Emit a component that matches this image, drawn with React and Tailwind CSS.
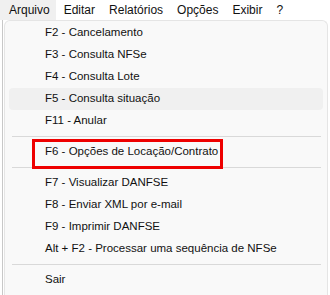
import React from 'react';

const menus = ['Arquivo', 'Editar', 'Relatórios', 'Opções', 'Exibir', '?'];

const Item = ({ label, active }) => (
  <div
    className={`h-[22px] mx-[4px] pl-[36px] flex items-center rounded-[4px] ${
      active ? 'bg-[#f0f0f0]' : ''
    }`}
  >
    {label}
  </div>
);

const Sep = () => (
  <div className="h-[9px] flex items-center pl-[7px] pr-[6px]">
    <div className="h-px w-full bg-[#d9d9d9]" />
  </div>
);

export default function App() {
  return (
    <div
      className="w-[330px] h-[295px] overflow-hidden bg-white text-[11.5px] text-[#111111]"
      style={{ fontFamily: '"Segoe UI", "Liberation Sans", Arial, sans-serif' }}
    >
      {/* barra de menus */}
      <div className="h-[20px] flex items-center text-[12px]">
        {menus.map((m, i) => (
          <div
            key={m}
            className={`h-full flex items-center ${
              i === 0 ? 'pl-[9px] pr-[6px] bg-[#f0f0f0]' : 'pl-[8px] pr-[6px]'
            }`}
          >
            {m}
          </div>
        ))}
      </div>

      <div className="flex h-full">
        <div className="w-[4px] flex">
          <div className="ml-[2px] w-px h-full bg-[#c8c8c8]" />
        </div>
        {/* menu Arquivo aberto */}
        <div className="relative w-[324px] h-full bg-[#f9f9f9] border-l border-t border-r border-[#e5e5e5] rounded-t-[6px] pt-[1px]">
          <Item label="F2 - Cancelamento" />
          <Item label="F3 - Consulta NFSe" />
          <Item label="F4 - Consulta Lote" />
          <Item label="F5 - Consulta situação" active />
          <Item label="F11 - Anular" />
          <Sep />
          <div className="relative">
            <Item label="F6 - Opções de Locação/Contrato" />
            <div className="absolute left-[27px] top-[-2px] w-[191px] h-[30px] border-[3px] border-[#ee0000]" />
          </div>
          <Sep />
          <Item label="F7 - Visualizar DANFSE" />
          <Item label="F8 - Enviar XML por e-mail" />
          <Item label="F9 - Imprimir DANFSE" />
          <Item label="Alt + F2 - Processar uma sequência de NFSe" />
          <Sep />
          <Item label="Sair" />
        </div>
      </div>
    </div>
  );
}
